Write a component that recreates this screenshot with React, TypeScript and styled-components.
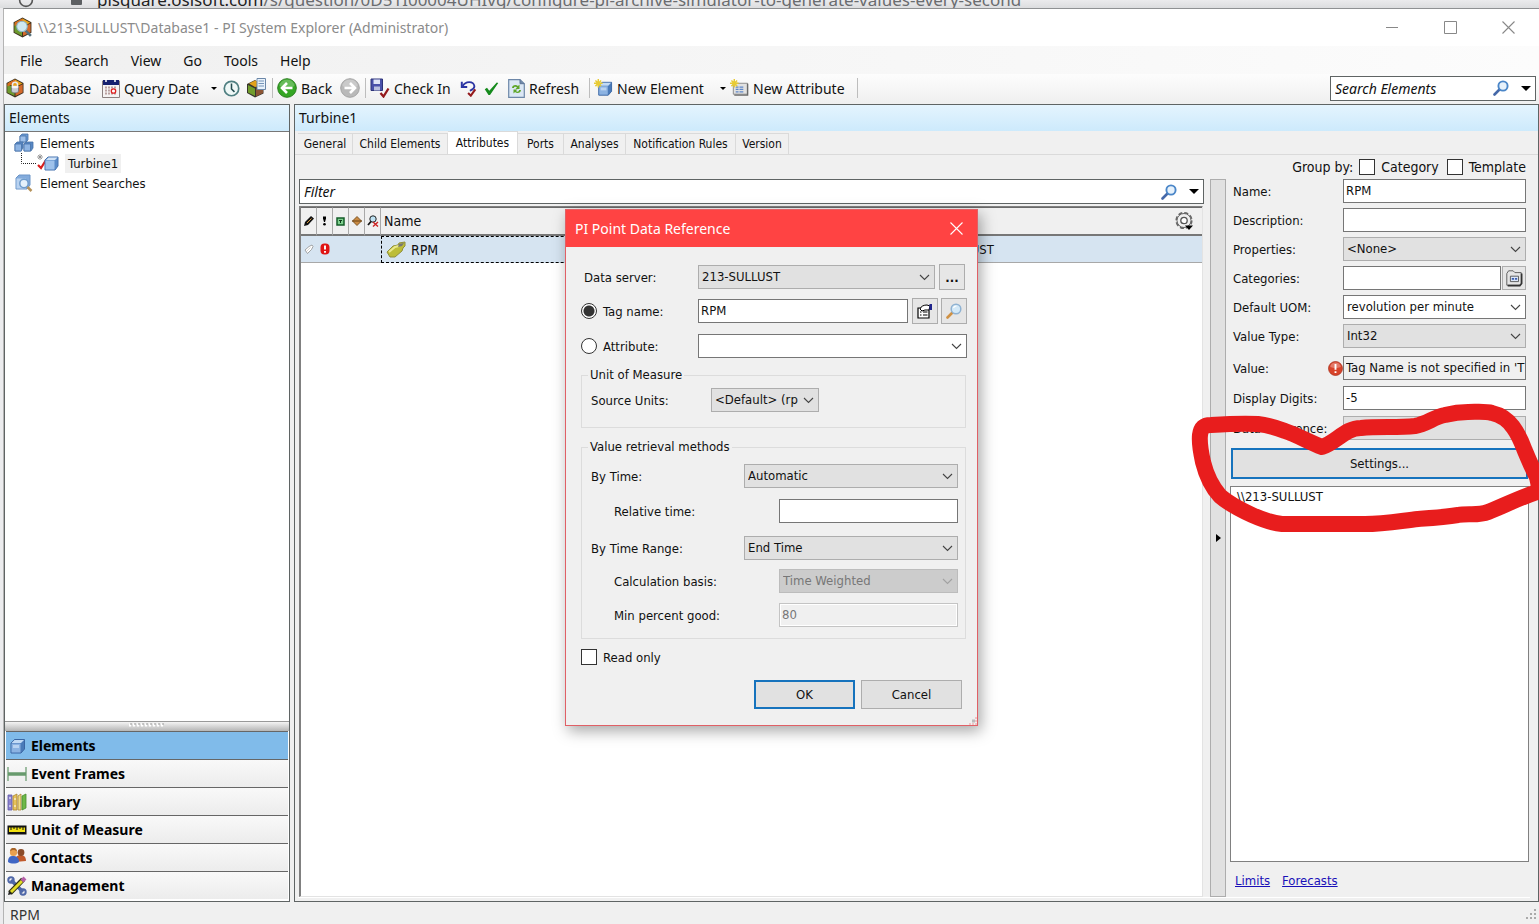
import React from "react";
import styled, { createGlobalStyle, css } from "styled-components";

const UI = `"Noto Sans", "Open Sans", sans-serif`;
const FORM = `"DejaVu Sans Condensed", "DejaVu Sans", sans-serif`;
const LINE = "#5f6464";

const Global = createGlobalStyle`
  *, *::before, *::after { box-sizing: border-box; }
  html, body { margin: 0; padding: 0; }
  body { font-family: ${UI}; font-size: 14px; color: #111; background: #ececee; overflow: hidden; }
  button, input, select, textarea { font: inherit; color: inherit; border-radius: 0; margin: 0; }
  svg { display: block; flex: none; }
`;

/* ---------- shell ---------- */
const Desktop = styled.div`
  display: flex;
  flex-direction: column;
  height: 100vh;
  position: relative;
`;
const BrowserStrip = styled.div`
  display: flex;
  align-items: flex-end;
  height: 8px;
  flex: none;
  overflow: hidden;
  padding-left: 18px;
  background: linear-gradient(#ebebed, #dcdddf);
  font-size: 17px;
  line-height: 16px;
  white-space: nowrap;
  color: #6a6c6f;
`;
const Address = styled.span`
  margin-left: 3px;
  b { font-weight: 400; color: #222; }
`;
const AppWindow = styled.div`
  flex: 1;
  min-height: 0;
  margin-left: 3px;
  display: flex;
  flex-direction: column;
  border-top: 1px solid #8f9193;
  border-left: 1px solid #b4b4b4;
  background: #f0f0f0;
`;
const TitleBar = styled.header`
  display: flex;
  align-items: center;
  height: 37px;
  flex: none;
  padding: 0 2px 0 8px;
  background: #fff;
  color: #8b8b8b;
`;
const Title = styled.h1`
  flex: 1;
  margin: 0 0 0 5px;
  font-size: 14px;
  font-weight: 400;
`;
const CaptionButton = styled.button`
  width: 58px;
  height: 36px;
  padding: 0;
  border: 0;
  background: none;
  display: flex;
  align-items: center;
  justify-content: center;
`;
const MenuBar = styled.nav`
  display: flex;
  align-items: center;
  height: 28px;
  flex: none;
  padding-left: 16px;
  gap: 22px;
  background: linear-gradient(90deg, #f0f0f0, #fcfcfc);
`;
const PlainButton = styled.button`
  display: flex;
  align-items: center;
  gap: 4px;
  padding: 0;
  border: 0;
  background: none;
  white-space: nowrap;
`;
const ToolBar = styled.div`
  display: flex;
  align-items: center;
  height: 30px;
  flex: none;
  padding: 0 3px 2px 1px;
  background: linear-gradient(#fdfdfd, #efefef);
`;
const Tool = styled(PlainButton)<{ $w: number }>`
  width: ${(p) => p.$w}px;
  flex: none;
`;
const Separator = styled.span<{ $before?: number }>`
  width: 1px;
  height: 20px;
  flex: none;
  margin: 0 4px 0 ${(p) => p.$before || 0}px;
  background: #bdbdbd;
`;
const Spacer = styled.span`
  flex: 1;
`;
const SearchField = styled.label<{ $w?: number }>`
  display: flex;
  align-items: center;
  height: 25px;
  flex: none;
  ${(p) => p.$w && css`width: ${p.$w}px;`}
  border: 1px solid ${LINE};
  background: #fff;
  padding: 0 4px;
  gap: 12px;
  input {
    flex: 1;
    min-width: 0;
    padding: 0;
    border: 0;
    outline: 0;
    background: none;
    font-style: italic;
    font-size: 14px;
  }
  input::placeholder { color: #111; opacity: 1; }
`;
const Work = styled.div`
  flex: 1;
  min-height: 0;
  display: flex;
  gap: 4px;
`;
const StatusBar = styled.footer`
  display: flex;
  align-items: center;
  justify-content: space-between;
  height: 22px;
  flex: none;
  padding: 2px 2px 0 6px;
  color: #333;
`;

/* ---------- navigator ---------- */
const Navigator = styled.aside`
  width: 286px;
  flex: none;
  display: flex;
  flex-direction: column;
  padding-bottom: 2px;
  background: #fff;
  border: 1px solid ${LINE};
`;
const PaneTitle = styled.h2`
  margin: 0;
  height: 26px;
  flex: none;
  padding-left: 4px;
  font-size: 14px;
  font-weight: 400;
  line-height: 26px;
  background: linear-gradient(#e4f4fe, #cdeafc);
`;
const Tree = styled.ul`
  flex: 1;
  margin: 0;
  padding: 1px 0 0 9px;
  list-style: none;
  background: #fff;
  border-top: 1px solid #777;
  font-family: ${FORM};
  font-size: 13px;
  ul { margin: 0; padding: 0; list-style: none; }
`;
const TreeRow = styled.div<{ $child?: boolean; $selected?: boolean }>`
  display: flex;
  align-items: center;
  height: 20px;
  gap: 5px;
  padding-left: ${(p) => (p.$child ? 7 : 0)}px;
  span { padding: 2px 3px; margin-left: ${(p) => (p.$child ? 1 : -2)}px; background: ${(p) => (p.$selected ? "#f0f0f0" : "none")}; }
`;
const Grip = styled.div`
  display: flex;
  justify-content: center;
  height: 10px;
  flex: none;
  padding-top: 1px;
  background: linear-gradient(#f4f4f4, #b5b5b5);
  border-top: 1px solid #999;
`;
const NavButton = styled.button<{ $active?: boolean }>`
  display: flex;
  align-items: center;
  gap: 4px;
  height: 28px;
  flex: none;
  margin: 0 1px;
  padding: 0 0 0 1px;
  border: 0;
  border-top: 1px solid #666;
  background: ${(p) => (p.$active ? "#80bbea" : "linear-gradient(#f9f9f9, #ececec)")};
  font-weight: 700;
  color: #000;
`;

/* ---------- main pane ---------- */
const Main = styled.main`
  flex: 1;
  min-width: 0;
  display: flex;
  flex-direction: column;
  border: 1px solid ${LINE};
`;
const Tabs = styled.div`
  display: flex;
  align-items: flex-end;
  height: 24px;
  flex: none;
  padding-left: 3px;
  border-bottom: 1px solid #dadada;
  font-family: ${FORM};
  font-size: 12px;
`;
const Tab = styled.button<{ $w: number; $active?: boolean }>`
  width: ${(p) => p.$w}px;
  height: ${(p) => (p.$active ? 23 : 21)}px;
  padding: 0;
  border: 1px solid #dadada;
  border-left-width: 0;
  border-bottom: 0;
  background: ${(p) => (p.$active ? "#fff" : "#f0f0f0")};
  white-space: nowrap;
`;
const Page = styled.section`
  flex: 1;
  min-height: 0;
  display: flex;
  flex-direction: column;
  margin: 0 8px 3px 3px;
  padding-left: 1px;
  border-bottom: 1px solid #fff;
`;
const GroupBy = styled.div`
  display: flex;
  align-items: center;
  justify-content: flex-end;
  height: 24px;
  flex: none;
  gap: 6px;
  padding-right: 4px;
  font-family: ${FORM};
  font-size: 14px;
`;
const Check = styled.label`
  display: flex;
  align-items: center;
  gap: 6px;
  & + & { margin-left: 2px; }
`;
const Box = styled.input.attrs({ type: "checkbox" })`
  appearance: none;
  width: 16px;
  height: 16px;
  flex: none;
  border: 1px solid #333;
  background: #fff;
`;
const Split = styled.div`
  flex: 1;
  min-height: 0;
  display: flex;
`;
const ListColumn = styled.div`
  flex: 1;
  min-width: 0;
  display: flex;
  flex-direction: column;
  gap: 2px;
`;
const Grid = styled.div`
  flex: 1;
  min-height: 0;
  margin-right: 1px;
  border: 1px solid #808080;
  border-left-width: 2px;
  border-right-color: #e3e3e3;
  border-bottom-color: #e3e3e3;
  background: #fff;
`;
const Table = styled.table`
  width: 100%;
  table-layout: fixed;
  border-collapse: separate;
  border-spacing: 0;
  font-family: ${FORM};
  font-size: 14px;
  text-align: left;
  th, td { padding: 0; font-weight: 400; white-space: nowrap; }
  th {
    height: 29px;
    background: #f0f0f0;
    border-top: 1px solid #696969;
    border-bottom: 2px solid #777;
  }
  th svg { margin: 0 auto; }
  td { height: 27px; background: #d6e4f1; border-bottom: 1px solid #a8a8a8; }
  td svg { margin: 0 auto; }
`;
const IconHead = styled.th`
  && { border-right: 1px solid #a9a9a9; }
`;
const NameHead = styled.th`
  && { padding-left: 3px; }
`;
const NameCell = styled.td`
  && { border: 1px dashed #000; }
`;
const ValueCell = styled.td`
  && { font-size: 13px; }
`;
const NameValue = styled.div`
  display: flex;
  align-items: center;
  gap: 5px;
  padding-left: 4px;
  &&& svg { margin: 0; }
`;
const GearHead = styled.th`
  &&& svg { margin: 0 8px 0 auto; }
`;
const SideHandle = styled.button`
  width: 16px;
  flex: none;
  margin: 0 4px 0 6px;
  padding: 0;
  border: 1px solid #adadad;
  background: #e1e1e1;
  display: flex;
  align-items: center;
  justify-content: center;
`;

/* ---------- form parts ---------- */
const Details = styled.form`
  width: 300px;
  flex: none;
  display: flex;
  flex-direction: column;
  font-family: ${FORM};
  font-size: 13px;
`;
const FieldGroup = styled.div<{ $gap: number }>`
  display: flex;
  flex-direction: column;
  gap: ${(p) => p.$gap}px;
  margin-bottom: 8px;
  padding: 0 4px 0 3px;
`;
const Field = styled.div`
  display: flex;
  align-items: center;
  height: 24px;
  > label { width: 95px; flex: none; white-space: nowrap; }
`;
const Mark = styled.span`
  width: 15px;
  flex: none;
`;
const TextInput = styled.input<{ $w?: number; $readonly?: boolean }>`
  height: 24px;
  ${(p) => (p.$w ? css`width: ${p.$w}px; flex: none;` : css`flex: 1; min-width: 0;`)}
  padding: 0 0 2px 2px;
  border: 1px solid #767676;
  background: ${(p) => (p.$readonly ? "#f0f0f0" : "#fff")};
  font-size: 13px;
  outline: 0;
  &:disabled { color: #777; background: #f0f0f0; border-color: #c4c4c4; box-shadow: inset 0 0 0 1px #fff; }
`;
const SelectWrap = styled.span<{ $w?: number; $light?: boolean; $off?: boolean }>`
  position: relative;
  display: block;
  height: 24px;
  ${(p) => (p.$w ? css`width: ${p.$w}px; flex: none;` : css`flex: 1; min-width: 0;`)}
  select {
    appearance: none;
    display: block;
    width: 100%;
    height: 24px;
    padding: 0 18px 1px 3px;
    border: 1px solid ${(p) => (p.$light ? "#767676" : p.$off ? "#bcbcbc" : "#adadad")};
    background: ${(p) => (p.$light ? "#fff" : p.$off ? "#cccccc" : "#e1e1e1")};
    color: ${(p) => (p.$off ? "#777" : "#111")};
    opacity: 1;
    font-size: 13px;
    outline: 0;
  }
  svg { position: absolute; right: 5px; top: 9px; pointer-events: none; opacity: ${(p) => (p.$off ? 0.3 : 1)}; }
`;
const SmallButton = styled.button<{ $flat?: boolean }>`
  width: ${(p) => (p.$flat ? 24 : 26)}px;
  height: ${(p) => (p.$flat ? 24 : 26)}px;
  margin-left: ${(p) => (p.$flat ? 1 : 0)}px;
  flex: none;
  padding: 0;
  display: flex;
  align-items: center;
  justify-content: center;
  border: 1px solid #adadad;
  background: #e6e6e6;
  font-weight: 700;
`;
const PushButton = styled.button<{ $primary?: boolean; $w?: number }>`
  height: 29px;
  ${(p) => p.$w && css`width: ${p.$w}px;`}
  padding: 0;
  border: ${(p) => (p.$primary ? "2px solid #1673bd" : "1px solid #adadad")};
  background: #e1e1e1;
`;
const SettingsButton = styled(PushButton)`
  height: 31px;
  flex: none;
  margin: 0 2px 7px 1px;
`;
const ConfigText = styled.textarea`
  flex: 1;
  min-height: 0;
  resize: none;
  outline: 0;
  margin-right: 1px;
  padding: 2px 6px;
  border: 1px solid #808080;
  background: #fff;
  font-size: 13px;
  line-height: 16px;
`;
const Links = styled.div`
  display: flex;
  gap: 12px;
  height: 35px;
  flex: none;
  padding: 10px 0 0 5px;
  line-height: 18px;
  a { color: #1a10b8; }
`;

/* ---------- dialog ---------- */
const Dialog = styled.form`
  position: absolute;
  left: 565px;
  top: 209px;
  width: 413px;
  display: flex;
  flex-direction: column;
  border: 1px solid #e06066;
  background: #f0f0f0;
  box-shadow: 3px 5px 14px rgba(0, 0, 0, 0.35);
  font-family: ${FORM};
  font-size: 13px;
`;
const DialogTitle = styled.div`
  display: flex;
  align-items: center;
  justify-content: space-between;
  height: 37px;
  padding: 0 14px 0 9px;
  background: #ff4343;
  color: #fff;
  font-family: ${UI};
  font-size: 14px;
`;
const DialogBody = styled.div`
  padding: 15px 10px 16px 15px;
`;
const DialogRow = styled.div<{ $h: number; $indent?: number }>`
  display: flex;
  align-items: center;
  height: ${(p) => p.$h}px;
  padding-left: ${(p) => p.$indent || 0}px;
`;
const RowLabel = styled.label<{ $w: number }>`
  display: flex;
  align-items: center;
  gap: 6px;
  width: ${(p) => p.$w}px;
  flex: none;
  white-space: nowrap;
`;
const Radio = styled.input.attrs({ type: "radio" })`
  appearance: none;
  width: 16px;
  height: 16px;
  flex: none;
  border: 1px solid #333;
  border-radius: 50%;
  background: #fff;
  &:checked { background: radial-gradient(circle, #333 0 5px, #fff 6px); }
`;
const ButtonPair = styled.div`
  display: flex;
  gap: 3px;
  margin-left: 4px;
`;
const Section = styled.fieldset<{ $h: number }>`
  margin: 4px 1px 10px 0;
  height: ${(p) => p.$h}px;
  padding: 0 7px 0 9px;
  border: 1px solid #dcdcdc;
  legend { padding: 0 2px; margin-left: -3px; line-height: 18px; }
`;
const Actions = styled.div`
  display: flex;
  justify-content: flex-end;
  gap: 6px;
  margin-top: 15px;
  padding-right: 5px;
`;
const Corner = styled.span`
  position: absolute;
  right: 0;
  bottom: 0;
`;
const Scribble = styled.svg`
  position: absolute;
  top: 404px;
  right: 0;
  width: 348px;
  height: 130px;
  overflow: visible;
  pointer-events: none;
`;

/* ---------- icons ---------- */
const Svg = ({ w = 20, h = w, vb = "0 0 20 20", children }: { w?: number; h?: number; vb?: string; children: React.ReactNode }) => (
  <svg width={w} height={h} viewBox={vb} fill="none" aria-hidden="true">{children}</svg>
);
const HexFaces = () => (
  <>
    <path d="M10 .5 18.500 5v10L10 19.500 1.500 15V5z" fill="#3c3120" />
    <path d="M10 1.500 17.500 5.500 10 9 2.500 5.500z" fill="#e8a21c" />
    <path d="M2.300 6.200 9.500 9.800V18L2.300 14.500z" fill="#6d9a2e" />
    <path d="M17.700 6.200v8.300L10.500 18V9.800z" fill="#d4692a" />
    <path d="M10 1.500 2.500 5.500v3L10 5z" fill="#d96b1e" />
  </>
);
const AppIcon = () => (
  <Svg w={21}><HexFaces /><path d="m13 13 5 5" stroke="#53707c" strokeWidth="2.500" /><circle cx="9.500" cy="9" r="5" fill="#cfe9f2" stroke="#8fb6c4" /></Svg>
);
const DatabaseIcon = () => (
  <Svg><HexFaces /><path d="M6.500 9v4c0 2.500 7 2.500 7 0V9z" fill="#c9cdd3" stroke="#70757d" strokeWidth=".8" /><path d="M7.500 9V6.500c0-3 5-3 5 0V9" stroke="#e9ebee" strokeWidth="1.500" /><ellipse cx="10" cy="9" rx="3.500" ry="1.300" fill="#f5f6f8" /></Svg>
);
const CalendarIcon = () => (
  <Svg w={18} h={19} vb="0 0 18 19">
    <path d="M.500 2h17v16.500H.500z" fill="#f5f3f3" stroke="#8b8080" />
    <path d="M1 1h16v5H1z" fill="#16206f" /><path d="M4 0v3M13 0v3" stroke="#fff" strokeWidth="1.500" />
    <path d="M3 8.500h12M3 11.500h12M3 14.500h12" stroke="#b9a0a0" strokeDasharray="2 1" strokeWidth="2" />
    <circle cx="11.500" cy="12" r="2.200" fill="#fff" stroke="#df2020" strokeWidth="1.300" />
  </Svg>
);
const ClockIcon = () => (
  <Svg w={17}><circle cx="10" cy="10" r="8.500" fill="#eff8f7" stroke="#4f7f81" strokeWidth="2" /><path d="M10 4v6.500l3.500 3.500" stroke="#244c50" strokeWidth="1.800" /></Svg>
);
const BoxDocIcon = () => (
  <Svg><path d="M9 2 1 6v9l8 4.500 8.500-4V8z" fill="#38352c" /><path d="m2 7 7 3.500V18l-7-3.500z" fill="#719d2c" /><path d="m3 5.500 6-3 3 1v5L9 9z" fill="#e2a21c" /><path d="M10 11h7v4l-7 3.500z" fill="#8c5534" /><path d="M11 .500h8.500v11H11z" fill="#e9f2fb" stroke="#6b87a8" /><path d="M12.500 3h5.500M12.500 5.500h5.500M12.500 8h5.500" stroke="#7795b8" /></Svg>
);
const ArrowBall = ({ back }: { back?: boolean }) => (
  <Svg>
    <circle cx="10" cy="10" r="9.300" fill={back ? "#34a624" : "#b9b9b9"} stroke={back ? "#2b7f20" : "#a4a4a4"} />
    <path d="M2.500 8a7.500 6.500 0 0 1 15 0c-4 2-11 2-15 0z" fill="#fff" opacity=".25" />
    <path d={back ? "M15.500 10H5.500M10 5l-5 5 5 5" : "M4.500 10h10M10 5l5 5-5 5"} stroke="#fff" strokeWidth="2.600" />
  </Svg>
);
const CheckInIcon = () => (
  <Svg w={20}><path d="M1 1h11.500v11.500H1z" fill="#4950a9" stroke="#2d3278" /><path d="M3.500 1.500h6.500v4.500H3.500z" fill="#dfe4f6" /><path d="M4 8.500h6v4H4z" fill="#b9bfdf" /><path d="m10.500 15 3 3.500 5-8" stroke="#94191c" strokeWidth="2.300" /></Svg>
);
const UndoIcon = () => (
  <Svg w={18}><path d="M2 3v6h6" stroke="#2c35a3" strokeWidth="2.200" /><path d="M3 8c3-6 12-6 13 0 0 3-3 4-5 5" stroke="#2c35a3" strokeWidth="2" /><path d="m9 15.500 3 3 5-7" stroke="#94191c" strokeWidth="2.300" /></Svg>
);
const TickIcon = () => (
  <Svg w={15}><path d="m1 11 3-2 3 4L17 2l2 .5L8 18.500H6z" fill="#158a1c" /></Svg>
);
const RefreshIcon = () => (
  <Svg w={17} h={19} vb="0 0 17 19"><path d="M.700.700H12l4.300 4v13.600H.700z" fill="#dbe7f5" stroke="#6d87a8" strokeWidth="1.200" /><path d="M12 .700v4h4.300" fill="#7189a9" stroke="#5e7698" /><path d="M4 9c0-3 4-4 6-2l1.500-1.500V10H7.500L9 8.500c-1-1-3-1-3 .500zM13 11c0 3-4 4-6 2l-1.500 1.500V10.500h4L8 12c1 1 3 1 3-1z" fill="#5ea628" /></Svg>
);
const Sparkle = () => (
  <path d="M4.500 0v9M0 4.500h9M1.500 1.500l6 6M7.500 1.500l-6 6" stroke="#e8cb34" strokeWidth="1.500" />
);
const Cube = () => (
  <>
    <path d="m5 7 3.500-3.500h10V13L15 17H5z" fill="#4a7ab8" stroke="#3a66a3" />
    <path d="m5.500 7 3-3h9.500l-3 3z" fill="#c3dbf5" /><path d="M5.500 7.500h9v9h-9z" fill="#8cb3e2" /><path d="M7 9h6v3H7z" fill="#b9d3f1" />
  </>
);
const NewElementIcon = () => <Svg w={19}><Cube /><Sparkle /></Svg>;
const NewAttributeIcon = () => (
  <Svg w={19}><path d="M3.500 4.500h15v11.500h-15z" fill="#e1e1e1" stroke="#8a8a8a" /><path d="M18.500 5v12h-14" stroke="#696969" strokeWidth="1.500" /><path d="M6 8.500h3M10 8.500h4M6 11h3M10 11h4M6 13.500h3M10 13.500h4" stroke="#5e87c9" strokeWidth="1.300" /><Sparkle /></Svg>
);
const CubeIcon = ({ w = 18 }: { w?: number }) => <Svg w={w} vb="1 0 20 20"><Cube /></Svg>;
const LensIcon = ({ w = 16, handle = "#4568a8" }: { w?: number; handle?: string }) => (
  <Svg w={w} vb="0 0 16 16"><path d="m6.500 9.500-5 5" stroke={handle} strokeWidth="2.600" strokeLinecap="round" /><circle cx="10" cy="6" r="4.600" fill="#e6f1fb" stroke="#4a86c8" strokeWidth="1.900" /></Svg>
);
const Triangle = ({ w = 10 }: { w?: number }) => <Svg w={w} h={w / 2} vb="0 0 10 5"><path d="M0 0h10L5 5z" fill="#000" /></Svg>;
const Chevron = () => <Svg w={11} h={7} vb="0 0 11 7"><path d="m1 1 4.500 4.500L10 1" stroke="#444" strokeWidth="1.100" /></Svg>;
const Cross = ({ color }: { color: string }) => <Svg w={13} vb="0 0 13 13"><path d="m.500.500 12 12M12.500.500l-12 12" stroke={color} strokeWidth="1.100" /></Svg>;
const CubesIcon = () => (
  <Svg w={20}><g stroke="#4872a8" strokeWidth=".8"><path d="m6 3 2-2h6v6l-2 2H6z" fill="#6b9bd4" /><path d="M6 3h6v6H6z" fill="#9ec0ea" /><path d="m1 11 2-2h6v6l-2 3H1z" fill="#5787c4" /><path d="M1 11h6.500v7H1z" fill="#8fb5e4" /><path d="m10 11 2-2h7v6l-2 3h-7z" fill="#5787c4" /><path d="M10 11h6.500v7H10z" fill="#8fb5e4" /></g></Svg>
);
const TurbineIcon = () => (
  <svg width="38" height="20" viewBox="0 0 38 20" fill="none" aria-hidden="true">
    <path d="M.500 0v10.500H16" stroke="#222" strokeDasharray="1 1" />
    <path d="M19 1v6M16 4h6M17 2l4 4M21 2l-4 4" stroke="#888" strokeWidth=".8" />
    <path d="m17 12 3 3 5-8" stroke="#d81e1e" strokeWidth="2.200" />
    <path d="m24 7 3-3h10v9l-3 4H24z" fill="#5b8cc9" stroke="#4673ae" /><path d="M24.500 7.500h9v9h-9z" fill="#9fc2eb" /><path d="m25 7 2.500-2.500h9L34 7z" fill="#d0e2f6" />
  </svg>
);
const ElementSearchIcon = () => (
  <Svg w={20}><path d="m2 5 3-3h11v10l-3 4H2z" fill="#83abdc" stroke="#6d95c7" /><path d="M2.500 5.500H12v10H2.500z" fill="#b9d2f0" /><circle cx="10" cy="10.500" r="4.200" fill="#e4f1fb" stroke="#6f9ccc" strokeWidth="1.500" /><path d="m13.500 14 4 4" stroke="#b5925a" strokeWidth="2.500" /></Svg>
);
const FramesIcon = () => <Svg><path d="M1 3v14M19 3v14" stroke="#6f9d74" strokeWidth="1.300" /><path d="M1 10h18" stroke="#679a6d" strokeWidth="3.500" /></Svg>;
const LibraryIcon = () => (
  <Svg><path d="M1 3h4v15H1z" fill="#8b83cf" stroke="#6159a8" strokeWidth=".8" /><path d="m6 4 4-2v16H6z" fill="#e6c25a" stroke="#a98430" strokeWidth=".8" /><path d="m11 4 3-2v16h-3z" fill="#f0dc86" stroke="#a98430" strokeWidth=".8" /><path d="m15 4 4-2v14l-4 2z" fill="#6db848" stroke="#488b2c" strokeWidth=".8" /><path d="M2 6h2M7 7h2M2 14h2M7 14h2" stroke="#fff" /></Svg>
);
const RulerIcon = () => <Svg><path d="M.500 5.500h19v9H.500z" fill="#111" /><path d="M2 7.500h16v4.500H2z" fill="#f0e010" /><path d="M4 7v3M7 7v2M10 7v3M13 7v2M16 7v3" stroke="#111" /></Svg>;
const ContactsIcon = () => (
  <Svg><path d="M8 14c0-5 2-7 5.500-7S19 9 19 13z" fill="#c05a2c" /><circle cx="14" cy="4.500" r="3.400" fill="#8a4b2a" /><path d="M1 14c0-5 2-6 5-6s6 1 6 6c-3 2-8 2-11 0z" fill="#3f66c4" /><circle cx="6.500" cy="4.500" r="3.600" fill="#e8a050" /><path d="M3 3.500c0-5 7-5 7 0-2-2-5-2-7 0z" fill="#a8662a" /></Svg>
);
const ToolsIcon = () => (
  <Svg><path d="m4 4 12 12" stroke="#4f67a8" strokeWidth="3.500" /><circle cx="4" cy="4" r="2.700" stroke="#4f67a8" strokeWidth="2" /><circle cx="16" cy="16" r="2.700" stroke="#4f67a8" strokeWidth="2" /><path d="M3 17 16 3.500" stroke="#303010" strokeWidth="5" /><path d="M4 16 15 5" stroke="#e2dc28" strokeWidth="3" /><path d="m15 5 3-3" stroke="#b45fa8" strokeWidth="4" /><path d="m1 19 1-4 3 3z" fill="#222" /></Svg>
);
const TagIcon = () => (
  <Svg w={20}><path d="m1 12 6-6 5-1 1-2 6-1 0 4-2 2-1 3-7 6-5 0z" fill="#bdbd38" stroke="#8f8e3c" /><path d="m3 12 6-5 4-1" stroke="#e9e88c" strokeWidth="2" /><path d="m13 4 5-1-2 3-4 1z" fill="#777" /></Svg>
);
const PaleTag = () => <Svg w={10}><path d="m2 12 8-7 6-3 2 3-3 6-8 8z" fill="#fff" stroke="#888" strokeWidth="1.500" /><path d="m5 15 8-8" stroke="#aaa" /></Svg>;
const PencilIcon = () => <Svg w={10} vb="0 0 10 10"><path d="m0 10 1-4L7 0l3 2.500L4 9z" fill="#111" /><path d="m3 7 4.500-4.500" stroke="#d99738" /></Svg>;
const BangIcon = () => <Svg w={5} h={10} vb="0 0 5 10"><path d="M1 .500h3v2L3 6H2L1 2.500z" fill="#000" /><circle cx="2.500" cy="8.300" r="1.300" fill="#000" /></Svg>;
const GreenBox = () => <Svg w={9} vb="0 0 9 9"><path d="M1 1h7v7H1z" fill="#7fd08f" stroke="#135c28" strokeWidth="1.500" /><path d="M3 3.500h3M4.500 3.500V6" stroke="#0b3b18" /></Svg>;
const Diamond = () => <Svg w={10} vb="0 0 10 10"><path d="m5 .500 4.500 4.500L5 9.500.500 5z" fill="#c98a42" stroke="#6a4312" strokeWidth=".8" /><path d="M0 5h10" stroke="#6a4312" /></Svg>;
const LensX = () => <Svg w={12} vb="0 0 12 12"><circle cx="6" cy="4" r="3.200" fill="#bfe3f4" stroke="#222" /><path d="M4 6.500 1 10" stroke="#111" strokeWidth="1.800" /><path d="m6 7 5 4.500M11 7l-5 4.500" stroke="#c22" strokeWidth="1.400" /></Svg>;
const RedBang = () => <Svg w={10} h={12} vb="0 0 10 12"><rect x=".500" y=".500" width="9" height="11" rx="4" fill="#e01414" /><path d="M5 2.500v4M5 8v1.700" stroke="#fff" strokeWidth="1.900" /></Svg>;
const GearIcon = () => (
  <Svg w={20}><circle cx="10" cy="9.500" r="7.600" stroke="#666" strokeWidth="2" strokeDasharray="4 1.970" /><circle cx="10" cy="9.500" r="7" fill="#f0f0f0" stroke="#666" /><circle cx="10" cy="9.500" r="3.200" fill="#fff" stroke="#555" strokeWidth="1.300" /><path d="M11 14.500h8l-4 4.500z" fill="#000" /></Svg>
);
const ErrorBall = () => <Svg w={15}><circle cx="10" cy="10" r="9.300" fill="#d8432a" stroke="#a8301c" /><path d="M3 8a7 6 0 0 1 14 0c-4 2-10 2-14 0z" fill="#fff" opacity=".3" /><path d="M10 4v7.500M10 13.500V16" stroke="#fff" strokeWidth="2.500" /></Svg>;
const FolderIcon = () => <Svg w={18}><path d="M2 5 4 2h5l2 2h7v12l-2 2H2z" fill="#e5e5e5" stroke="#555" /><path d="M18.500 5v11l-2 2.500H3" stroke="#333" strokeWidth="1.800" /><path d="M6 8h9v6H6z" fill="#dce6f8" stroke="#555" /><path d="M7.500 11h2.500M11 11h2.500" stroke="#3d5fae" strokeWidth="2" /></Svg>;
const PropertiesIcon = () => <Svg w={16} vb="0 0 16 16"><path d="M1 5h11v10H1z" fill="#fff" stroke="#000" strokeWidth="1.200" /><path d="M3 9h1.500M6 9h4.500M3 12h1.500M6 12h4.500" stroke="#000" strokeWidth="1.200" /><path d="M3 6c1-3 4-4 7-4l3 1-1 4-4 0-3 1z" fill="#fff" stroke="#000" /><path d="M12.500 1H15v6h-2.500z" fill="#20248c" /></Svg>;
const FindIcon = () => <Svg w={16} vb="0 0 16 16"><path d="m6.500 9.500-5 5" stroke="#cf9144" strokeWidth="2.600" strokeLinecap="round" /><circle cx="10" cy="6" r="4.800" fill="#d3e9f8" stroke="#8fb2d2" strokeWidth="1.500" /><path d="M7.500 5c.5-1.500 2-2 3-2" stroke="#fff" strokeWidth="1.200" /></Svg>;
const DotGrip = () => <Svg w={12} vb="0 0 12 12"><path d="M9 2h2M5 6h2M9 6h2M1 10h2M5 10h2M9 10h2" stroke="#aaa" strokeWidth="2" /></Svg>;
const CornerDots = () => <Svg w={8} vb="0 0 8 8"><path d="M6 1h2M6 4h2M0 7h2M3 7h2M6 7h2" stroke="#eeb4b6" strokeWidth="1.500" /><path d="M3 4h3" stroke="#bbb" strokeWidth="3" /></Svg>;

/* ---------- composed controls ---------- */
function Select({ id, value, w, light, off, label }: { id?: string; value: string; w?: number; light?: boolean; off?: boolean; label?: string }) {
  return (
    <SelectWrap $w={w} $light={light} $off={off}>
      <select id={id} disabled={off} aria-label={label}><option>{value}</option></select>
      <Chevron />
    </SelectWrap>
  );
}

const navItems: [string, React.ReactNode][] = [
  ["Elements", <CubeIcon w={20} />],
  ["Event Frames", <FramesIcon />],
  ["Library", <LibraryIcon />],
  ["Unit of Measure", <RulerIcon />],
  ["Contacts", <ContactsIcon />],
  ["Management", <ToolsIcon />],
];
const tabs: [string, number][] = [
  ["General", 55], ["Child Elements", 95], ["Attributes", 70], ["Ports", 46],
  ["Analyses", 62], ["Notification Rules", 110], ["Version", 53],
];

function AttributeDetails() {
  return (
    <Details>
      <FieldGroup $gap={5}>
        <Field><label htmlFor="name">Name:</label><Mark /><TextInput id="name" defaultValue="RPM" /></Field>
        <Field><label htmlFor="desc">Description:</label><Mark /><TextInput id="desc" /></Field>
        <Field><label htmlFor="props">Properties:</label><Mark /><Select id="props" value="<None>" /></Field>
        <Field>
          <label htmlFor="cats">Categories:</label><Mark /><TextInput id="cats" />
          <SmallButton type="button" $flat aria-label="Choose categories"><FolderIcon /></SmallButton>
        </Field>
        <Field><label htmlFor="uom">Default UOM:</label><Mark /><Select id="uom" value="revolution per minute" light /></Field>
        <Field><label htmlFor="type">Value Type:</label><Mark /><Select id="type" value="Int32" /></Field>
      </FieldGroup>
      <FieldGroup $gap={6}>
        <Field><label htmlFor="value">Value:</label><Mark><ErrorBall /></Mark><TextInput id="value" $readonly readOnly value="Tag Name is not specified in 'T" /></Field>
        <Field><label htmlFor="digits">Display Digits:</label><Mark /><TextInput id="digits" defaultValue="-5" /></Field>
        <Field><label htmlFor="ref">Data Reference:</label><Mark /><Select id="ref" value="" /></Field>
      </FieldGroup>
      <SettingsButton type="button" $primary>Settings...</SettingsButton>
      <ConfigText aria-label="Configuration" defaultValue={"\\\\213-SULLUST"} />
      <Links><a href="#limits">Limits</a><a href="#forecasts">Forecasts</a></Links>
    </Details>
  );
}

function PointDialog() {
  return (
    <Dialog role="dialog" aria-label="PI Point Data Reference">
      <DialogTitle>
        <span>PI Point Data Reference</span>
        <PlainButton type="button" aria-label="Close dialog"><Cross color="#fff" /></PlainButton>
      </DialogTitle>
      <DialogBody>
        <DialogRow $h={30} $indent={3}>
          <RowLabel $w={114} htmlFor="server">Data server:</RowLabel>
          <Select id="server" value="213-SULLUST" w={237} />
          <ButtonPair><SmallButton type="button">...</SmallButton></ButtonPair>
        </DialogRow>
        <DialogRow $h={38}>
          <RowLabel $w={117}><Radio name="source" defaultChecked />Tag name:</RowLabel>
          <TextInput aria-label="Tag name" $w={210} defaultValue="RPM" />
          <ButtonPair>
            <SmallButton type="button" aria-label="Properties"><PropertiesIcon /></SmallButton>
            <SmallButton type="button" aria-label="Find tag"><FindIcon /></SmallButton>
          </ButtonPair>
        </DialogRow>
        <DialogRow $h={32}>
          <RowLabel $w={117}><Radio name="source" />Attribute:</RowLabel>
          <Select label="Attribute" value="" light w={269} />
        </DialogRow>
        <Section $h={62}>
          <legend>Unit of Measure</legend>
          <DialogRow $h={32}>
            <RowLabel $w={120} htmlFor="units">Source Units:</RowLabel>
            <Select id="units" value="<Default> (rp" w={108} />
          </DialogRow>
        </Section>
        <Section $h={201}>
          <legend>Value retrieval methods</legend>
          <DialogRow $h={40}>
            <RowLabel $w={153} htmlFor="bytime">By Time:</RowLabel>
            <Select id="bytime" value="Automatic" w={214} />
          </DialogRow>
          <DialogRow $h={30} $indent={23}>
            <RowLabel $w={165} htmlFor="reltime">Relative time:</RowLabel>
            <TextInput id="reltime" $w={179} />
          </DialogRow>
          <DialogRow $h={44}>
            <RowLabel $w={153} htmlFor="range">By Time Range:</RowLabel>
            <Select id="range" value="End Time" w={214} />
          </DialogRow>
          <DialogRow $h={22} $indent={23}>
            <RowLabel $w={165} htmlFor="basis">Calculation basis:</RowLabel>
            <Select id="basis" value="Time Weighted" off w={179} />
          </DialogRow>
          <DialogRow $h={46} $indent={23}>
            <RowLabel $w={165} htmlFor="good">Min percent good:</RowLabel>
            <TextInput id="good" $w={179} disabled defaultValue="80" />
          </DialogRow>
        </Section>
        <Check><Box />Read only</Check>
        <Actions>
          <PushButton type="button" $primary $w={101}>OK</PushButton>
          <PushButton type="button" $w={101}>Cancel</PushButton>
        </Actions>
      </DialogBody>
      <Corner><CornerDots /></Corner>
    </Dialog>
  );
}

export default function App() {
  return (
    <Desktop>
      <Global />
      <BrowserStrip>
        <Svg w={16}><circle cx="10" cy="10" r="8" stroke="#555" strokeWidth="2" /></Svg>
        <Svg w={60} h={12} vb="0 0 60 12"><rect x="37" y="0" width="11" height="9" rx="1" fill="#5d6063" /></Svg>
        <Address><b>pisquare.osisoft.com</b>/s/question/0D51I00004UHIvg/configure-pi-archive-simulator-to-generate-values-every-second</Address>
      </BrowserStrip>
      <AppWindow>
        <TitleBar>
          <AppIcon />
          <Title>{"\\\\213-SULLUST\\Database1 - PI System Explorer (Administrator)"}</Title>
          <CaptionButton aria-label="Minimize"><Svg w={13} vb="0 0 13 13"><path d="M0 6.500h12" stroke="#888" /></Svg></CaptionButton>
          <CaptionButton aria-label="Maximize"><Svg w={13} vb="0 0 13 13"><path d="M.500.500h12v12H.500z" stroke="#888" /></Svg></CaptionButton>
          <CaptionButton aria-label="Close"><Cross color="#888" /></CaptionButton>
        </TitleBar>
        <MenuBar>
          {["File", "Search", "View", "Go", "Tools", "Help"].map((m) => <PlainButton key={m}>{m}</PlainButton>)}
        </MenuBar>
        <ToolBar>
          <Tool $w={97}><DatabaseIcon />Database</Tool>
          <Tool $w={115}><CalendarIcon />Query Date<Spacer /><Triangle w={6} /></Tool>
          <Tool $w={23} aria-label="Time"><Spacer /><ClockIcon /></Tool>
          <Tool $w={26} aria-label="Contents"><Spacer /><BoxDocIcon /></Tool>
          <Separator $before={6} />
          <Tool $w={63}><ArrowBall back />Back</Tool>
          <Tool $w={25} aria-label="Forward"><ArrowBall /></Tool>
          <Separator />
          <Tool $w={90}><CheckInIcon />Check In</Tool>
          <Tool $w={24} aria-label="Undo"><UndoIcon /></Tool>
          <Tool $w={24} aria-label="Apply"><TickIcon /></Tool>
          <Tool $w={81}><RefreshIcon />Refresh</Tool>
          <Separator />
          <Tool $w={136}><NewElementIcon />New Element<Spacer /><Triangle w={6} /><span /></Tool>
          <Tool $w={127}><NewAttributeIcon />New Attribute</Tool>
          <Separator />
          <Spacer />
          <SearchField $w={206}>
            <input placeholder="Search Elements" aria-label="Search Elements" />
            <LensIcon />
            <Triangle />
          </SearchField>
        </ToolBar>
        <Work>
          <Navigator>
            <PaneTitle>Elements</PaneTitle>
            <Tree>
              <li>
                <TreeRow><CubesIcon /><span>Elements</span></TreeRow>
                <ul><li><TreeRow $child $selected><TurbineIcon /><span>Turbine1</span></TreeRow></li></ul>
              </li>
              <li><TreeRow><ElementSearchIcon /><span>Element Searches</span></TreeRow></li>
            </Tree>
            <Grip><Svg w={36} h={4} vb="0 0 36 4"><path d="M0 2h36" stroke="#fff" strokeWidth="3" strokeDasharray="2 2" /><path d="M1 1h36" stroke="#999" strokeDasharray="2 2" /></Svg></Grip>
            {navItems.map(([name, icon], i) => <NavButton key={name} $active={i === 0}>{icon}{name}</NavButton>)}
          </Navigator>
          <Main>
            <PaneTitle>Turbine1</PaneTitle>
            <Tabs role="tablist">
              {tabs.map(([name, w]) => <Tab key={name} role="tab" $w={w} $active={name === "Attributes"}>{name}</Tab>)}
            </Tabs>
            <Page>
              <GroupBy>Group by:<Check><Box />Category</Check><Check><Box />Template</Check></GroupBy>
              <Split>
                <ListColumn>
                  <SearchField><input placeholder="Filter" aria-label="Filter" /><LensIcon /><Triangle /></SearchField>
                  <Grid>
                    <Table>
                      <colgroup>
                        {[0, 1, 2, 3, 4].map((c) => <col key={c} style={{ width: 16 }} />)}
                        <col style={{ width: 527 }} /><col />
                      </colgroup>
                      <thead>
                        <tr>
                          <IconHead><PencilIcon /></IconHead><IconHead><BangIcon /></IconHead><IconHead><GreenBox /></IconHead>
                          <IconHead><Diamond /></IconHead><IconHead><LensX /></IconHead>
                          <NameHead>Name</NameHead><GearHead><GearIcon /></GearHead>
                        </tr>
                      </thead>
                      <tbody>
                        <tr>
                          <td><PaleTag /></td><td><RedBang /></td><td /><td /><td />
                          <NameCell><NameValue><TagIcon />RPM</NameValue></NameCell>
                          <ValueCell>{"\\\\213-SULLUST"}</ValueCell>
                        </tr>
                      </tbody>
                    </Table>
                  </Grid>
                </ListColumn>
                <SideHandle aria-label="Collapse details"><Svg w={5} h={8} vb="0 0 5 8"><path d="M0 0v8l5-4z" fill="#000" /></Svg></SideHandle>
                <AttributeDetails />
              </Split>
            </Page>
          </Main>
        </Work>
        <StatusBar>RPM<DotGrip /></StatusBar>
      </AppWindow>
      <PointDialog />
      <Scribble viewBox="0 0 348 130" fill="none" aria-hidden="true">
        <path d="M20 21C35 20 52 19 67 20C77 21 86 24 94 27C106 31 118 38 131 43C146 38 154 24 170 24C188 22 206 24 224 22C236 20 243 13 254 11C262 9 269 8 277 8C286 8 294 7 301 9C310 11 317 16 322 23C328 31 331 39 334 47C338 56 341 64 346 73L349 87C330 93 312 102 297 108C287 112 277 109 267 111C254 113 240 114 227 115C209 117 192 120 174 120H91C80 119 70 115 61 111C48 105 37 99 29 92C20 82 15 70 12 58C10 49 8 40 9 31C10 23 14 21 20 21Z" stroke="#e81d1d" strokeWidth="16" strokeLinejoin="round" />
      </Scribble>
    </Desktop>
  );
}
